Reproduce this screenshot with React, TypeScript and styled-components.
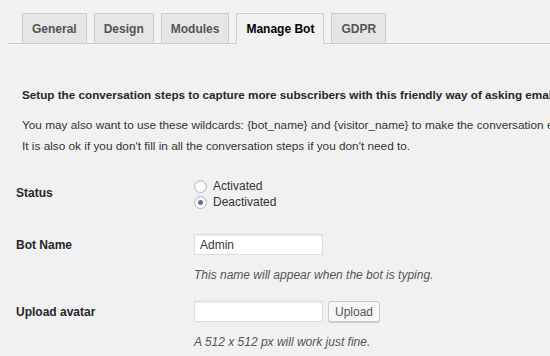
import styled, { createGlobalStyle } from "styled-components";

const GlobalStyle = createGlobalStyle`
  html, body {
    margin: 0;
    padding: 0;
    background: #f1f1f1;
    overflow: hidden;
  }
  body {
    font-family: "Liberation Sans", Arial, sans-serif;
    color: #23282d;
  }
`;

const Page = styled.div`
  width: 550px;
  height: 356px;
  overflow: hidden;
  padding-top: 13px;
  box-sizing: border-box;
`;

const TabBar = styled.div`
  display: flex;
  gap: 7px;
  margin-left: 8px;
  padding-left: 14px;
  border-bottom: 1px solid #ccc;
`;

const Tab = styled.div<{ $active?: boolean }>`
  padding: 0 9px;
  display: flex;
  align-items: center;
  font-size: 12px;
  font-weight: bold;
  border: 1px solid #ccc;
  border-bottom: none;
  margin-bottom: ${(p) => (p.$active ? "-1px" : "0")};
  height: ${(p) => (p.$active ? "30px" : "29px")};
  background: ${(p) => (p.$active ? "#f1f1f1" : "#e5e5e5")};
  color: ${(p) => (p.$active ? "#000" : "#555")};
`;

const Content = styled.div`
  padding: 41px 0 0 22px;
`;

const Lead = styled.p`
  margin: 0 0 10px;
  font-size: 11.7px;
  font-weight: bold;
  white-space: nowrap;
  line-height: 20px;
`;

const Note = styled.p`
  margin: 0;
  font-size: 11.8px;
  white-space: nowrap;
  line-height: 21px;
  color: #333;
`;

const Form = styled.div`
  margin: 18px 0 0 -6px;
  display: flex;
  flex-direction: column;
`;

const Row = styled.div<{ $gap?: number }>`
  display: grid;
  grid-template-columns: 178px 1fr;
  margin-bottom: ${(p) => p.$gap ?? 0}px;
`;

const Label = styled.div<{ $top?: boolean }>`
  font-size: 12px;
  font-weight: bold;
  color: #23282d;
  display: flex;
  align-items: ${(p) => (p.$top ? "flex-start" : "center")};
  padding-top: ${(p) => (p.$top ? "4px" : "0")};
`;

const Field = styled.div<{ $pad?: number }>`
  display: flex;
  flex-direction: column;
  padding-top: ${(p) => p.$pad ?? 0}px;
`;

const RadioLine = styled.label`
  display: flex;
  align-items: center;
  gap: 6px;
  height: 16px;
  font-size: 12px;
  color: #333;
`;

const RadioDot = styled.span<{ $checked?: boolean }>`
  width: 13px;
  height: 13px;
  box-sizing: border-box;
  border-radius: 50%;
  border: 1px solid #b4b9be;
  background: #fff;
  box-shadow: inset 0 1px 2px rgba(0, 0, 0, 0.1);
  display: flex;
  align-items: center;
  justify-content: center;
  &::after {
    content: "";
    width: 5px;
    height: 5px;
    border-radius: 50%;
    background: ${(p) => (p.$checked ? "#5a7397" : "transparent")};
  }
`;

const InputLine = styled.div`
  display: flex;
  gap: 5px;
  align-items: center;
`;

const TextBox = styled.div`
  width: 129px;
  height: 21px;
  box-sizing: border-box;
  border: 1px solid #ddd;
  background: #fff;
  box-shadow: inset 0 1px 2px rgba(0, 0, 0, 0.07);
  font-size: 12px;
  color: #32373c;
  padding-left: 5px;
  display: flex;
  align-items: center;
`;

const Button = styled.div`
  width: 52px;
  height: 21px;
  box-sizing: border-box;
  border: 1px solid #ccc;
  border-radius: 3px;
  background: #f7f7f7;
  box-shadow: 0 1px 0 #ccc;
  font-size: 12px;
  color: #555;
  display: flex;
  align-items: center;
  justify-content: center;
`;

const Hint = styled.div`
  font-size: 12px;
  font-style: italic;
  color: #555;
  margin-top: 13px;
`;

export default function App() {
  return (
    <Page>
      <GlobalStyle />
      <TabBar>
        <Tab>General</Tab>
        <Tab>Design</Tab>
        <Tab>Modules</Tab>
        <Tab $active>Manage Bot</Tab>
        <Tab>GDPR</Tab>
      </TabBar>
      <Content>
        <Lead>
          Setup the conversation steps to capture more subscribers with this
          friendly way of asking email addresses.
        </Lead>
        <Note>
          You may also want to use these wildcards: {"{bot_name}"} and{" "}
          {"{visitor_name}"} to make the conversation even more realistic.
        </Note>
        <Note>
          It is also ok if you don't fill in all the conversation steps if you
          don't need to.
        </Note>
        <Form>
          <Row $gap={24}>
            <Label>Status</Label>
            <Field $pad={3}>
              <RadioLine>
                <RadioDot />
                Activated
              </RadioLine>
              <RadioLine>
                <RadioDot $checked />
                Deactivated
              </RadioLine>
            </Field>
          </Row>
          <Row $gap={19}>
            <Label $top>Bot Name</Label>
            <Field>
              <TextBox>Admin</TextBox>
              <Hint>This name will appear when the bot is typing.</Hint>
            </Field>
          </Row>
          <Row>
            <Label $top>Upload avatar</Label>
            <Field>
              <InputLine>
                <TextBox />
                <Button>Upload</Button>
              </InputLine>
              <Hint>A 512 x 512 px will work just fine.</Hint>
            </Field>
          </Row>
        </Form>
      </Content>
    </Page>
  );
}
